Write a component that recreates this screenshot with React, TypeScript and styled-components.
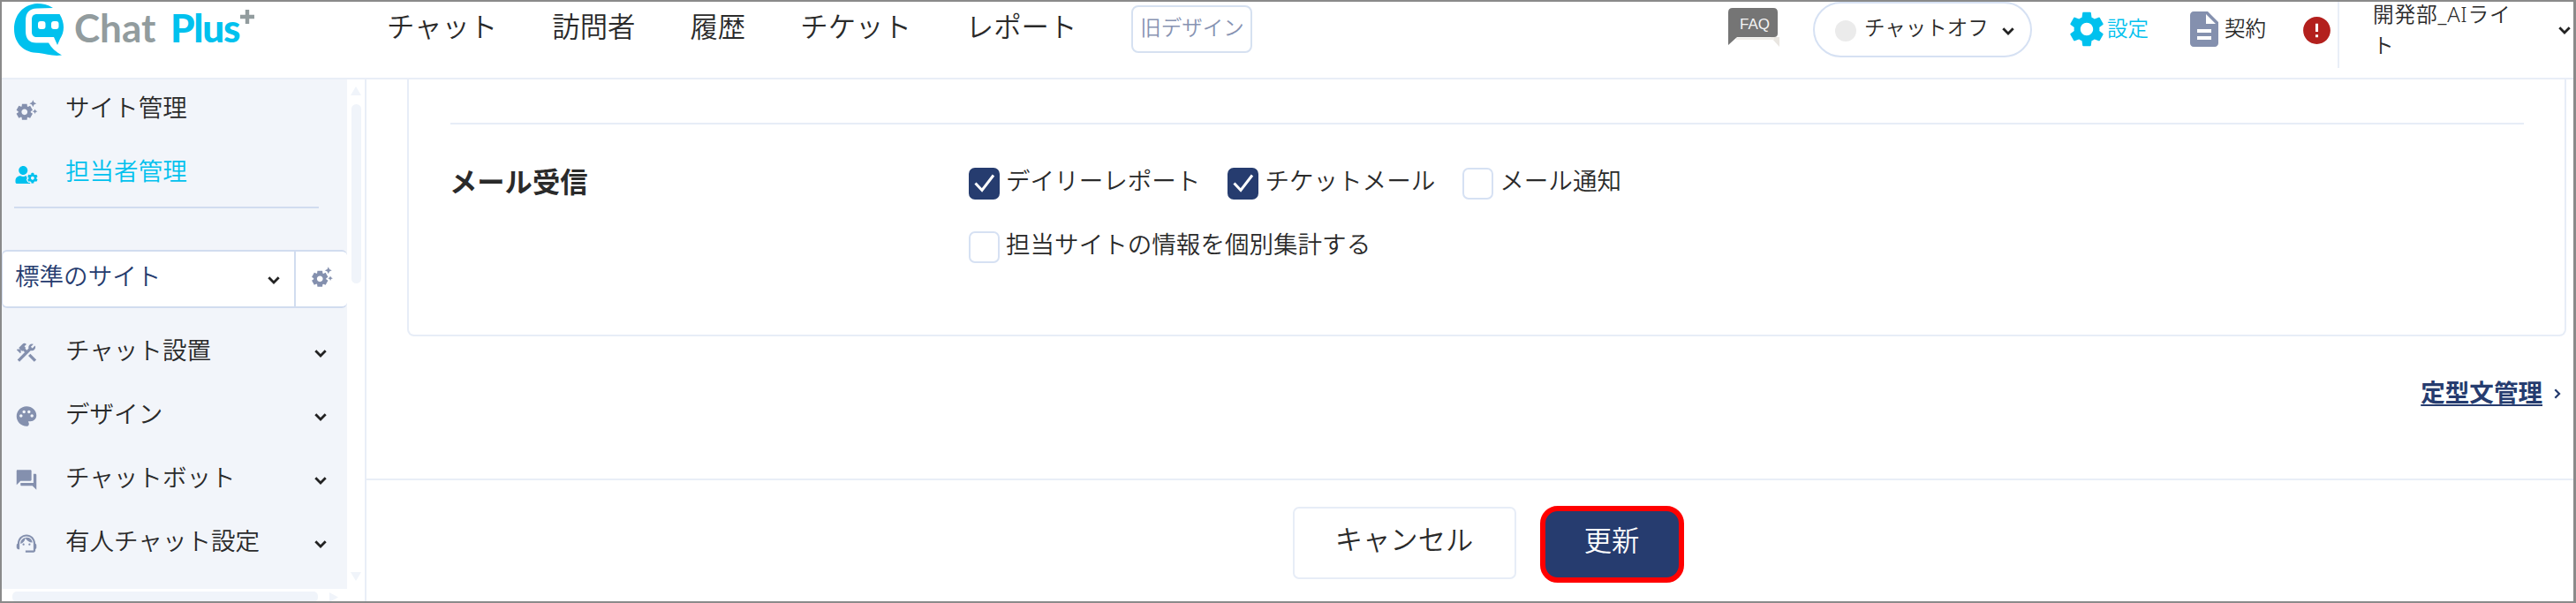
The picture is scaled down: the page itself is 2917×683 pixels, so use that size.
import styled, { createGlobalStyle } from "styled-components";
import { FaUserCog } from "react-icons/fa";
import {
  MdConstruction,
  MdDescription,
  MdError,
  MdForum,
  MdPalette,
  MdSettings,
  MdSettingsSuggest,
  MdSupportAgent,
} from "react-icons/md";

const navItems = ["チャット", "訪問者", "履歴", "チケット", "レポート"];

const menuItems = [
  { label: "チャット設置", Icon: MdConstruction },
  { label: "デザイン", Icon: MdPalette },
  { label: "チャットボット", Icon: MdForum },
  { label: "有人チャット設定", Icon: MdSupportAgent },
];

const Chevron = () => (
  <svg width="14" height="9" viewBox="0 0 14 9" fill="none">
    <path d="M1.3 1.3L7 7L12.7 1.3" stroke="#222" strokeWidth="2.8" />
  </svg>
);

const Logo = () => (
  <LogoLink>
    <svg width="56" height="60" viewBox="0 0 56 60">
      <path
        d="M44 5C38 1 32 0 26 0C10 1 0 13 0 29C0 45 11 56 28 56C36 57 44 60 54 58.500C47 55 42 50 39 44.500H25C17 44.500 13 40 13 31V20C13 10 17 6 26 5.500Z"
        fill="#00c1ee"
      />
      <path
        d="M26 12H51.500C54.500 17 56 22 56 27C56 32 54.500 36 52 40L49 47L45 38H26C22 38 20 36 20 32V18C20 14 22 12 26 12Z"
        fill="#00c1ee"
      />
      <rect x="27" y="20" width="8.500" height="9" rx="3" fill="#fff" />
      <rect x="42" y="20" width="8.500" height="9" rx="3" fill="#fff" />
    </svg>
    <LogoText>
      Chat <b>Plus</b>
    </LogoText>
    <LogoPlus width="18" height="18" viewBox="0 0 18 18">
      <path d="M9 1V17M1 9H17" stroke="#929c9e" strokeWidth="4.4" />
    </LogoPlus>
  </LogoLink>
);

const Check = ({ label, checked }: { label: string; checked?: boolean }) => (
  <CheckLabel>
    <CheckBox $checked={checked}>
      {checked && (
        <svg width="24" height="22" viewBox="0 0 24 22" fill="none">
          <path d="M1.500 10.500L9 18.500L22 1.500" stroke="#fff" strokeWidth="3" />
        </svg>
      )}
    </CheckBox>
    {label}
  </CheckLabel>
);

const App = () => {
  return (
    <Frame>
      <GlobalStyle />
      <Header>
        <Logo />
        <Nav>
          {navItems.map((item) => (
            <NavItem key={item}>{item}</NavItem>
          ))}
        </Nav>
        <OldDesign>旧デザイン</OldDesign>
        <HeaderRight>
          <Faq>
            <svg width="58" height="44" viewBox="0 0 58 44">
              <path d="M48 33H58V44Z" fill="#e9e6e1" />
              <path d="M9 33.500H52V36H9Z" fill="#f0eeea" />
              <path
                d="M5 0H51Q56 0 56 5V29Q56 33 52 33H10L0 42V5Q0 0 5 0Z"
                fill="#757575"
              />
            </svg>
            <FaqText>FAQ</FaqText>
          </Faq>
          <ChatStatus>
            <Dot />
            チャットオフ
            <Chevron />
          </ChatStatus>
          <HeaderLink $active>
            <MdSettings size={48} />
            設定
          </HeaderLink>
          <HeaderLink>
            <MdDescription size={48} />
            契約
          </HeaderLink>
          <Alert size={37} />
          <Account>
            <AccountName>開発部_AIライト</AccountName>
            <Chevron />
          </Account>
        </HeaderRight>
      </Header>
      <Body>
        <SideArea>
          <Sidebar>
            <TopMenu>
              <MenuItem>
                <MdSettingsSuggest size={27} />
                <span>サイト管理</span>
              </MenuItem>
              <MenuItem $active>
                <FaUserCog size={20} />
                <span>担当者管理</span>
              </MenuItem>
            </TopMenu>
            <Divider />
            <SiteSelect>
              <SiteName>
                標準のサイト
                <Chevron />
              </SiteName>
              <SiteSetting>
                <MdSettingsSuggest size={27} />
              </SiteSetting>
            </SiteSelect>
            {menuItems.map(({ label, Icon }) => (
              <MenuItem key={label}>
                <Icon size={27} />
                <span>{label}</span>
                <Chevron />
              </MenuItem>
            ))}
          </Sidebar>
          <ScrollY>
            <svg width="12" height="10" viewBox="0 0 12 10">
              <path d="M6 0L12 10H0Z" fill="#f0f4fa" />
            </svg>
            <ThumbY />
            <svg width="12" height="10" viewBox="0 0 12 10">
              <path d="M0 0H12L6 10Z" fill="#f0f4fa" />
            </svg>
          </ScrollY>
          <ScrollX>
            <ThumbX />
            <svg width="10" height="11" viewBox="0 0 10 11">
              <path d="M0 0L10 5.500L0 11Z" fill="#f0f4fa" />
            </svg>
          </ScrollX>
        </SideArea>
        <Main>
          <Card>
            <FormRow>
              <FormTitle>メール受信</FormTitle>
              <Checks>
                <CheckRow>
                  <Check label="デイリーレポート" checked />
                  <Check label="チケットメール" checked />
                  <Check label="メール通知" />
                </CheckRow>
                <CheckRow>
                  <Check label="担当サイトの情報を個別集計する" />
                </CheckRow>
              </Checks>
            </FormRow>
          </Card>
          <TemplateLink>
            <a>定型文管理</a>
            <svg width="8" height="12" viewBox="0 0 8 12" fill="none">
              <path d="M1.300 1.300L6 6L1.300 10.700" stroke="#263c6f" strokeWidth="2.300" />
            </svg>
          </TemplateLink>
          <Footer>
            <Button>キャンセル</Button>
            <Button $primary>更新</Button>
          </Footer>
        </Main>
      </Body>
    </Frame>
  );
};

const GlobalStyle = createGlobalStyle`
  * {
    box-sizing: border-box;
  }
  body {
    margin: 0;
    background: #fff;
    color: #2a2a2a;
    font-family: "Noto Sans", "Noto Sans CJK JP", sans-serif;
    font-size: 27.55px;
    font-weight: 350;
  }
  svg {
    display: block;
    flex-shrink: 0;
  }
`;

const Frame = styled.div`
  display: flex;
  flex-direction: column;
  width: 2917px;
  height: 683px;
  border: 2px solid #8a8a8a;
  border-right-width: 3px;
  overflow: hidden;
`;

const Header = styled.header`
  display: flex;
  align-items: flex-start;
  height: 88px;
  flex-shrink: 0;
  border-bottom: 2px solid #e9eef7;
`;

const LogoLink = styled.a`
  display: flex;
  flex-shrink: 0;
  width: 436px;
  padding: 2px 0 0 14px;
`;

const LogoText = styled.span`
  width: 187px;
  margin: -3px 0 0 12px;
  font-family: Lato, sans-serif;
  font-size: 44px;
  font-weight: 700;
  line-height: 60px;
  word-spacing: 6px;
  color: #929c9e;
  white-space: nowrap;

  b {
    font-weight: 900;
    letter-spacing: -1.2px;
    color: #00c1ee;
  }
`;

const LogoPlus = styled.svg`
  margin-top: 6px;
`;

const Nav = styled.nav`
  display: flex;
  gap: 62px;
`;

const NavItem = styled.a`
  font-size: 31.4px;
  line-height: 56px;
  white-space: nowrap;
`;

const OldDesign = styled.button`
  width: 137px;
  height: 54px;
  margin: 4px 0 0 62px;
  padding: 0 0 7px;
  border: 2px solid #d6e1f1;
  border-radius: 8px;
  background: #fff;
  color: #8793b2;
  font-family: inherit;
  font-size: 23.5px;
  font-weight: inherit;
  white-space: nowrap;
`;

const HeaderRight = styled.div`
  display: flex;
  flex: 1;
  justify-content: flex-end;
  font-size: 23.5px;
  white-space: nowrap;
`;

const Faq = styled.a`
  position: relative;
  margin: 7px 38px 0 0;
`;

const FaqText = styled.span`
  position: absolute;
  top: 9px;
  left: 1px;
  width: 58px;
  color: #f4f4f4;
  font-family: "Liberation Sans", sans-serif;
  font-size: 17px;
  font-weight: 400;
  line-height: 20px;
  text-align: center;
`;

const ChatStatus = styled.div`
  display: flex;
  align-items: center;
  width: 248px;
  height: 63px;
  margin-right: 38px;
  padding: 0 18px 5px 23px;
  border: 2px solid #d6e1f3;
  border-radius: 32px;
  line-height: 34px;

  svg {
    margin: 8px 0 0 auto;
  }
`;

const Dot = styled.i`
  width: 24px;
  height: 24px;
  margin: 7px 9px 0 0;
  border-radius: 50%;
  background: #ebebeb;
`;

const HeaderLink = styled.a<{ $active?: boolean }>`
  display: flex;
  align-items: center;
  height: 58px;
  margin-right: 39px;
  color: ${({ $active }) => ($active ? "#00c1ee" : "#2a2a2a")};

  svg {
    margin: 4px -1px 0 0;
    color: ${({ $active }) => ($active ? "#00c1ee" : "#8490ae")};
  }
`;

const Alert = styled(MdError)`
  margin: 14px 5px 0 0;
  color: #b3201d;
`;

const Account = styled.div`
  display: flex;
  align-items: center;
  justify-content: space-between;
  width: 267px;
  height: 75px;
  padding: 0 3px 11px 38px;
  border-left: 2px solid #e9eef7;
`;

const AccountName = styled.span`
  width: 172px;
  font-size: 23.7px;
  letter-spacing: 0.8px;
  line-height: 35px;
  white-space: normal;
  word-break: break-all;
`;

const Body = styled.div`
  display: flex;
  flex: 1;
  min-height: 0;
`;

const SideArea = styled.div`
  display: grid;
  grid-template: 577px 14px / 391px 20px;
  border-right: 2px solid #e9eef7;
`;

const Sidebar = styled.aside`
  background: #f2f5fa;
  overflow: hidden;
`;

const TopMenu = styled.div`
  height: 144px;
  margin-top: -3px;
`;

const MenuItem = styled.div<{ $active?: boolean }>`
  display: flex;
  align-items: center;
  height: 72px;
  padding: 0 23px 0 14px;
  color: ${({ $active }) => ($active ? "#00c1ee" : "#2a2a2a")};
  white-space: nowrap;

  span {
    flex: 1;
    margin: -6px 0 0 30px;
  }

  > svg {
    margin-top: 5px;
  }

  > svg:first-child {
    width: 28px;
    margin-top: ${({ $active }) => ($active ? "6px" : "3px")};
    color: ${({ $active }) => ($active ? "#00c1ee" : "#8490ae")};
  }
`;

const Divider = styled.hr`
  width: 345px;
  height: 2px;
  margin: 3px 0 47px 14px;
  border: 0;
  background: #d1dcef;
`;

const SiteSelect = styled.div`
  display: flex;
  width: 391px;
  height: 66px;
  margin-bottom: 13px;
  border: 2px solid #d1dcef;
  border-width: 2px 0 2px 1px;
  border-radius: 6px;
  background: #fff;
  color: #263c6f;
`;

const SiteName = styled.div`
  display: flex;
  align-items: center;
  justify-content: space-between;
  width: 332px;
  padding: 0 16px 11px 14px;
  border-right: 2px solid #d1dcef;
  white-space: nowrap;

  svg {
    margin-top: 13px;
  }
`;

const SiteSetting = styled.div`
  display: flex;
  align-items: center;
  padding: 0 0 6px 16px;
  color: #8490ae;
`;

const ScrollY = styled.div`
  display: flex;
  flex-direction: column;
  align-items: center;
  padding: 8px 0 9px;

  svg:last-child {
    margin-top: auto;
  }
`;

const ThumbY = styled.div`
  width: 11px;
  height: 203px;
  margin-top: 10px;
  border-radius: 6px;
  background: #f0f4fa;
`;

const ScrollX = styled.div`
  display: flex;
  align-items: center;
  gap: 13px;
  padding: 4px 0 0 12px;
`;

const ThumbX = styled.div`
  width: 346px;
  height: 12px;
  border-radius: 5px;
  background: #f0f4fa;
`;

const Main = styled.main`
  flex: 1;
  min-width: 0;
`;

const Card = styled.section`
  width: 2445px;
  height: 291px;
  margin-left: 46px;
  padding: 49px 46px 0 47px;
  border: 2px solid #e7edf7;
  border-top: 0;
  border-radius: 0 0 8px 8px;
`;

const FormRow = styled.div`
  display: flex;
  border-top: 2px solid #e7edf7;
`;

const FormTitle = styled.h2`
  width: 588px;
  margin: 35px 0 0 -1px;
  font-size: 31.3px;
  line-height: 60px;
`;

const Checks = styled.div`
  padding-top: 31px;
`;

const CheckRow = styled.div`
  display: flex;
  gap: 31px;
  height: 72px;
`;

const CheckLabel = styled.label`
  display: flex;
  align-items: center;
  height: 66px;
  line-height: 66px;
  white-space: nowrap;
`;

const CheckBox = styled.i<{ $checked?: boolean }>`
  display: flex;
  align-items: center;
  justify-content: center;
  width: 35px;
  height: 36px;
  margin: 6px 7px 0 0;
  border: 2px solid ${({ $checked }) => ($checked ? "#263c6f" : "#d6e1f3")};
  border-radius: 7px;
  background: ${({ $checked }) => ($checked ? "#263c6f" : "#fff")};
`;

const TemplateLink = styled.div`
  display: flex;
  align-items: center;
  justify-content: flex-end;
  gap: 13px;
  height: 161px;
  padding: 0 14px 32px 0;

  a {
    margin-top: -6px;
    color: #263c6f;
    font-weight: 700;
    text-decoration: underline;
    text-decoration-thickness: 2px;
    text-underline-offset: 3px;
  }
`;

const Footer = styled.footer`
  display: flex;
  justify-content: center;
  gap: 27px;
  height: 139px;
  padding: 29px 0 0 41px;
  border-top: 2px solid #e9eef7;
`;

const Button = styled.button<{ $primary?: boolean }>`
  width: ${({ $primary }) => ($primary ? "163px" : "253px")};
  height: ${({ $primary }) => ($primary ? "87px" : "82px")};
  margin-top: ${({ $primary }) => ($primary ? "0" : "1px")};
  padding: 0 0 12px;
  border: ${({ $primary }) => ($primary ? "6px solid #f00" : "2px solid #e7edf7")};
  border-radius: ${({ $primary }) => ($primary ? "20px" : "7px")};
  background: ${({ $primary }) => ($primary ? "#263c6f" : "#fff")};
  color: ${({ $primary }) => ($primary ? "#fff" : "#2a2a2a")};
  font-family: inherit;
  font-size: 31.3px;
  font-weight: inherit;
`;

export default App;
